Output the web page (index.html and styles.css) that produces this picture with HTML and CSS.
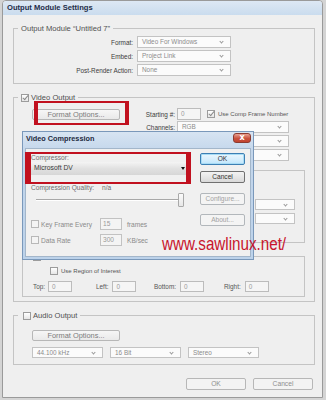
FILE: index.html
```html
<!DOCTYPE html>
<html lang="en">
<head>
    <meta charset="UTF-8">
    <meta name="viewport" content="width=device-width, initial-scale=1.0">
    <title>Output Module Settings</title>
    <link rel="stylesheet" href="styles.css">
</head>
<body>
    <div class="window">
        <div class="titlebar">Output Module Settings</div>

        <div class="window-body">
            <!-- Output module -->
            <fieldset class="group group-module">
                <legend>Output Module “Untitled 7”</legend>
                <div class="field-row">
                    <span class="field-label">Format:</span>
                    <div class="dropdown module-dd">Video For Windows</div>
                </div>
                <div class="field-row">
                    <span class="field-label">Embed:</span>
                    <div class="dropdown module-dd">Project Link</div>
                </div>
                <div class="field-row">
                    <span class="field-label">Post-Render Action:</span>
                    <div class="dropdown module-dd">None</div>
                </div>
            </fieldset>

            <!-- Video -->
            <fieldset class="group group-video">
                <legend><span class="check checked"></span>Video Output</legend>
                <div class="video-top">
                    <div class="video-left">
                        <button class="btn btn-options">Format Options...</button>
                    </div>
                    <div class="video-right">
                        <div class="vrow">
                            <span class="vlabel">Starting #:</span>
                            <span class="textbox start-box">0</span>
                            <span class="check checked comp-check"></span>
                            <span class="small-text">Use Comp Frame Number</span>
                        </div>
                        <div class="vrow">
                            <span class="vlabel">Channels:</span>
                            <div class="dropdown video-dd">RGB</div>
                        </div>
                        <div class="vrow">
                            <span class="vlabel"></span>
                            <div class="dropdown video-dd"></div>
                        </div>
                        <div class="vrow">
                            <span class="vlabel"></span>
                            <div class="dropdown video-dd"></div>
                        </div>
                    </div>
                </div>

                <!-- resize box, mostly under the dialog -->
                <div class="subgroup resize">
                    <div class="resize-row"><div class="dropdown resize-dd"></div></div>
                    <div class="resize-row"><div class="dropdown resize-dd"></div></div>
                </div>

                <fieldset class="subgroup crop">
                    <legend><span class="check"></span></legend>
                    <div class="roi-row"><span class="check"></span><span class="small-text">Use Region of Interest</span></div>
                    <div class="crop-grid">
                        <div class="crop-cell"><span>Top:</span><span class="textbox crop-box">0</span></div>
                        <div class="crop-cell"><span>Left:</span><span class="textbox crop-box">0</span></div>
                        <div class="crop-cell"><span>Bottom:</span><span class="textbox crop-box">0</span></div>
                        <div class="crop-cell"><span>Right:</span><span class="textbox crop-box">0</span></div>
                    </div>
                </fieldset>
            </fieldset>

            <!-- Audio -->
            <fieldset class="group group-audio">
                <legend><span class="check"></span>Audio Output</legend>
                <button class="btn btn-options">Format Options...</button>
                <div class="audio-row">
                    <div class="dropdown audio-dd">44.100 kHz</div>
                    <div class="dropdown audio-dd">16 Bit</div>
                    <div class="dropdown audio-dd">Stereo</div>
                </div>
            </fieldset>

            <div class="footer">
                <button class="btn btn-footer">OK</button>
                <button class="btn btn-footer">Cancel</button>
            </div>
        </div>

        <!-- Video Compression dialog over the settings -->
        <div class="dialog">
            <div class="dialog-title">
                <span>Video Compression</span>
                <span class="close-btn">x</span>
            </div>
            <div class="dialog-body">
                <div class="dialog-left">
                    <div class="dlg-label">Compressor:</div>
                    <div class="compressor">Microsoft DV</div>
                    <div class="dlg-label quality">Compression Quality:<span class="na">n/a</span></div>
                    <div class="slider">
                        <div class="slider-track"></div>
                        <div class="slider-thumb"></div>
                    </div>
                    <div class="dlg-row keyframe">
                        <span class="check"></span>
                        <span class="dlg-row-label">Key Frame Every</span>
                        <span class="dlg-input">15</span>
                        <span>frames</span>
                    </div>
                    <div class="dlg-row datarate">
                        <span class="check"></span>
                        <span class="dlg-row-label">Data Rate</span>
                        <span class="dlg-input">300</span>
                        <span>KB/sec</span>
                    </div>
                </div>
                <div class="dialog-buttons">
                    <button class="dbtn dbtn-default">OK</button>
                    <button class="dbtn dbtn-cancel">Cancel</button>
                    <button class="dbtn dbtn-disabled dbtn-configure">Configure...</button>
                    <button class="dbtn dbtn-disabled dbtn-about">About...</button>
                </div>
            </div>
        </div>

        <!-- red marks drawn over the screenshot -->
        <div class="highlight hl-format"></div>
        <div class="highlight hl-compressor"></div>
        <div class="watermark">www.sawlinux.net/</div>
    </div>
</body>
</html>
```

FILE: styles.css
```css
body {
    margin: 0;
    background-color: #d4d4d4;
    font-family: "Liberation Sans", Arial, sans-serif;
    font-size: 6.4px;
    color: #3c3c3c;
}

.window {
    position: relative;
    box-sizing: border-box;
    width: 321px;
    height: 398px;
    margin-left: 2px;
    background-color: #efefef;
    border: 1px solid #9a9a9a;
    border-radius: 4px 4px 0 0;
}

.titlebar {
    height: 14px;
    line-height: 14px;
    padding-left: 4px;
    background: linear-gradient(#dde8f4, #cadcee);
    color: #1f2d48;
    font-weight: bold;
    font-size: 7.6px;
    border-radius: 3px 3px 0 0;
}

.window-body {
    padding-top: 8px;
}

/* group boxes */
.group,
.subgroup {
    box-sizing: border-box;
    min-width: 0;
    margin: 0;
    border: 1px solid #c4c4c4;
    padding: 0 0 0 4px;
}

.group {
    width: 302px;
    margin-left: 10px;
}

.group legend,
.subgroup legend {
    display: flex;
    align-items: center;
    height: 11px;
    line-height: 11px;
    padding: 0 3px;
    font-size: 7.6px;
    color: #505050;
}

.group-module {
    padding-top: 2px;
    padding-bottom: 7px;
}

.field-row {
    display: flex;
    align-items: center;
    gap: 4px;
    margin-bottom: 2px;
}

.field-row:last-child {
    margin-bottom: 0;
}

.field-label {
    width: 115px;
    text-align: right;
}

/* dropdowns */
.dropdown {
    position: relative;
    box-sizing: border-box;
    height: 12px;
    line-height: 10px;
    padding-left: 4px;
    border: 1px solid #c3c3c3;
    background-color: #fbfbfb;
    color: #8c8c8c;
}

.dropdown::after {
    content: "";
    position: absolute;
    right: 7px;
    top: 3px;
    width: 2px;
    height: 2px;
    border-right: 1px solid #9a9a9a;
    border-bottom: 1px solid #9a9a9a;
    transform: rotate(45deg);
}

.module-dd {
    width: 94px;
}

/* checkboxes */
.check {
    display: inline-block;
    box-sizing: border-box;
    width: 8px;
    height: 8px;
    margin-right: 2px;
    border: 1px solid #9c9c9c;
    background: linear-gradient(#ffffff, #e6e6e6);
    position: relative;
}

.check.checked::after {
    content: "";
    position: absolute;
    left: 2px;
    top: -1px;
    width: 2px;
    height: 5px;
    border-right: 1px solid #8a8a8a;
    border-bottom: 1px solid #8a8a8a;
    transform: rotate(40deg);
}

/* video output */
.group-video {
    margin-top: 8px;
    padding-top: 5px;
    padding-bottom: 4px;
}

.video-top {
    display: flex;
}

.video-left {
    width: 120px;
}

.btn {
    font-family: "Liberation Sans", Arial, sans-serif;
    box-sizing: border-box;
    padding: 0;
    border: 1px solid #b7b7b7;
    border-radius: 2px;
    background: linear-gradient(#f6f6f6, #e9e9e9);
    color: #7c7c7c;
}

.btn-options {
    width: 88px;
    height: 11px;
    line-height: 9px;
    margin: 1px 0 0 14px;
    font-size: 7.4px;
}

.vrow {
    display: flex;
    align-items: center;
    height: 12px;
    margin-bottom: 2px;
}

.vrow:first-child {
    margin-bottom: 1px;
}

.vlabel {
    width: 37px;
    margin-right: 2px;
    text-align: right;
}

.textbox {
    box-sizing: border-box;
    height: 12px;
    line-height: 10px;
    padding-left: 3px;
    border: 1px solid #bcbcbc;
    background-color: #f5f5f5;
    color: #9a9a9a;
}

.start-box {
    width: 24px;
}

.comp-check {
    margin-left: 6px;
    margin-right: 3px;
}

.small-text {
    font-size: 6px;
    color: #555;
}

.video-dd {
    width: 112px;
}

.subgroup {
    width: 283px;
    margin-left: 4px;
}

.resize {
    margin-top: 7px;
    padding-top: 28px;
    padding-bottom: 18px;
}

.resize-row {
    display: flex;
    justify-content: flex-end;
    padding-right: 9px;
    height: 11px;
    margin-bottom: 3px;
}

.resize-row:last-child {
    margin-bottom: 0;
}

.resize-dd {
    width: 40px;
    height: 11px;
}

.crop {
    margin-top: 8px;
    padding-top: 4px;
    padding-bottom: 4px;
}

.crop legend {
    padding-left: 6px;
}

.roi-row {
    display: flex;
    align-items: center;
    height: 9px;
    margin-left: 23px;
}

.roi-row .check {
    margin-right: 3px;
}

.crop-grid {
    display: grid;
    grid-template-columns: 63px 58px 70px 1fr;
    margin: 6px 0 0 6px;
}

.crop-cell {
    display: flex;
    align-items: center;
    gap: 4px;
    color: #555;
}

.crop-cell:first-child {
    gap: 3px;
}

.crop-box {
    width: 24px;
    height: 11px;
    line-height: 9px;
}

/* audio output */
.group-audio {
    margin-top: 8px;
    padding-top: 8px;
    padding-bottom: 6px;
}

.group-audio legend {
    padding-left: 5px;
}

.audio-row {
    display: flex;
    gap: 7px;
    margin: 6px 0 0 14px;
}

.audio-dd {
    width: 71px;
    height: 11px;
    line-height: 9px;
}

.footer {
    display: flex;
    justify-content: flex-end;
    gap: 7px;
    margin-top: 13px;
    padding-right: 9px;
}

.btn-footer {
    width: 60px;
    height: 12px;
    line-height: 10px;
    font-size: 6.7px;
    background: #f3f3f3;
    color: #8e8e8e;
}

/* Video Compression dialog */
.dialog {
    position: absolute;
    left: 19px;
    top: 130px;
    box-sizing: border-box;
    width: 232px;
    height: 129px;
    border: 1px solid #7a98ba;
    padding: 0 2px 2px;
    background: linear-gradient(#d7e4f2, #c3d6eb 20px, #bcd2ea);
    display: flex;
    flex-direction: column;
}

.dialog-title {
    display: flex;
    justify-content: space-between;
    align-items: flex-start;
    height: 16px;
    padding-left: 1px;
    line-height: 14px;
    font-size: 7.3px;
    font-weight: bold;
    color: #1d2a40;
}

.close-btn {
    box-sizing: border-box;
    width: 18px;
    height: 10px;
    margin-top: 1px;
    border: 1px solid #8c3b30;
    border-radius: 3px;
    background: linear-gradient(#e9a293, #c9523f 55%, #c2432f);
    color: #fff;
    font-size: 8px;
    line-height: 7px;
    text-align: center;
    font-family: "DejaVu Sans", sans-serif;
}

.dialog-body {
    flex: 1;
    display: flex;
    gap: 14px;
    padding: 4px 5px 0;
    border: 1px solid #a3b6ca;
    background-color: #f0f0f0;
    font-size: 6.6px;
    color: #6e6e6e;
}

.dialog-left {
    width: 155px;
}

.dlg-label {
    height: 9px;
    line-height: 9px;
}

.compressor {
    position: relative;
    box-sizing: border-box;
    height: 13px;
    line-height: 12px;
    padding-left: 3px;
    background: linear-gradient(#f4f4f4, #e1e1e1 50%, #d6d6d6);
    color: #3a3a3a;
    font-size: 6.8px;
}

.compressor::after {
    content: "";
    position: absolute;
    right: 1px;
    top: 5px;
    border-left: 2px solid transparent;
    border-right: 2px solid transparent;
    border-top: 3px solid #111;
}

.quality {
    margin-top: 9px;
    height: 8px;
    line-height: 8px;
}

.na {
    margin-left: 8px;
}

.slider {
    display: flex;
    align-items: center;
    height: 14px;
    margin-top: 1px;
    padding-left: 5px;
}

.slider-track {
    width: 142px;
    height: 0;
    border-top: 1px solid #a8a8a8;
    border-bottom: 1px solid #ffffff;
}

.slider-thumb {
    box-sizing: border-box;
    width: 6px;
    height: 14px;
    border: 1px solid #a9a9a9;
    border-radius: 1px;
    background: linear-gradient(#fbfbfb, #e7e7e7);
}

.dlg-row {
    display: flex;
    align-items: center;
    height: 12px;
    color: #8a8a8a;
}

.keyframe {
    margin-top: 11px;
}

.datarate {
    margin-top: 4px;
}

.dlg-row .check {
    border-color: #b8b8b8;
    background: #f4f4f4;
}

.dlg-row-label {
    width: 59px;
}

.dlg-input {
    box-sizing: border-box;
    width: 22px;
    height: 12px;
    line-height: 10px;
    margin-right: 5px;
    padding-left: 2px;
    border: 1px solid #c2c2c2;
    background-color: #f4f4f4;
    color: #9a9a9a;
}

.dialog-buttons {
    display: flex;
    flex-direction: column;
    width: 45px;
}

.dbtn {
    box-sizing: border-box;
    height: 12px;
    padding: 0;
    border: 1px solid #707070;
    border-radius: 2px;
    background: linear-gradient(#f3f3f3, #e6e6e6 50%, #d9d9d9);
    font-family: "Liberation Sans", Arial, sans-serif;
    font-size: 6.6px;
    line-height: 10px;
    color: #333;
}

.dbtn-default {
    border-color: #3d7fb3;
    box-shadow: inset 0 0 0 1px #a8dcf5;
    background: linear-gradient(#eaf6fd, #d9effc 50%, #bee6fd);
}

.dbtn-cancel {
    margin-top: 6px;
}

.dbtn-disabled {
    border-color: #b2b7bb;
    background: #f4f4f4;
    color: #a3a3a3;
}

.dbtn-configure {
    margin-top: 10px;
}

.dbtn-about {
    margin-top: 9px;
}

/* red annotation marks */
.highlight {
    position: absolute;
    box-sizing: border-box;
    border-style: solid;
    border-color: #c1111f;
}

.hl-format {
    left: 31px;
    top: 100px;
    width: 95px;
    height: 24px;
    border-width: 2px 4px 2px 4px;
}

.hl-compressor {
    left: 22px;
    top: 151px;
    width: 166px;
    height: 32px;
    border-width: 2px 5px 2px 6px;
}

.watermark {
    position: absolute;
    left: 159px;
    top: 236px;
    font-family: "Liberation Sans", Arial, sans-serif;
    font-size: 15.2px;
    line-height: 15px;
    color: #c8142c;
    transform: scaleY(1.15);
    transform-origin: left bottom;
}
```
